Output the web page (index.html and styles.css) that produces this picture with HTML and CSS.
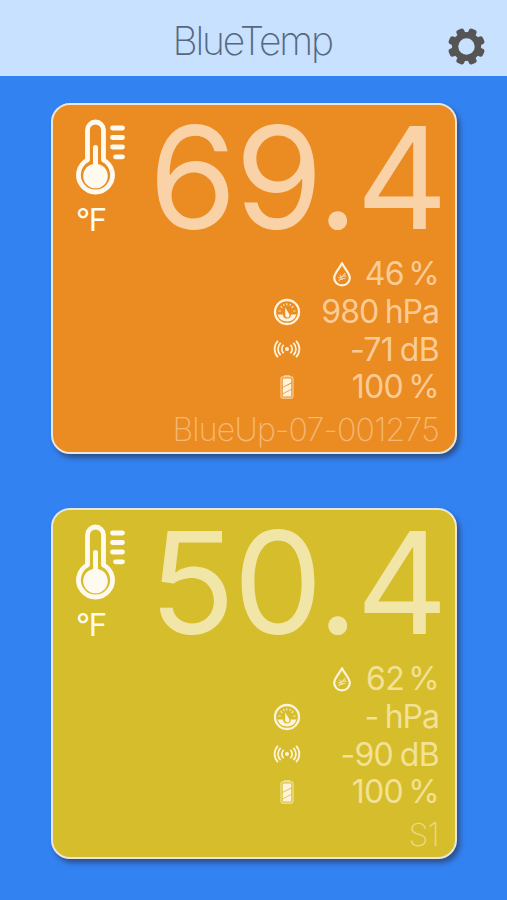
FILE: index.html
```
<!DOCTYPE html>
<html lang="en">
<head>
    <meta charset="UTF-8">
    <meta name="viewport" content="width=device-width, initial-scale=1.0">
    <title>BlueTemp</title>
    <link rel="stylesheet" href="styles.css">
</head>
<body>
    <!-- Shared icons -->
    <svg class="sprite">
        <symbol id="thermometer" viewBox="0 0 50 78">
            <path d="M11.500 42V12a8 8 0 0 1 16 0V42A17 17 0 1 1 11.500 42Z" fill="none" stroke="currentColor" stroke-width="4.8" stroke-linejoin="round"/>
            <circle cx="19.500" cy="58" r="12.300" fill="currentColor"/>
            <path d="M19.500 55V29.500" stroke="currentColor" stroke-width="5" stroke-linecap="round"/>
            <path d="M36.500 10H46.500M36.500 19.500H46.500M36.500 29H46.500M39.500 38.800H46.500" stroke="currentColor" stroke-width="4.800" stroke-linecap="round"/>
        </symbol>
        <symbol id="drop" viewBox="0 0 20 26">
            <path d="M10 2.200C8 7 2.200 12.200 2.200 17a7.800 7.400 0 0 0 15.600 0C17.800 12.200 12 7 10 2.200Z" fill="none" stroke="currentColor" stroke-width="2.200" stroke-linejoin="round"/>
            <path d="M7 19.500l6-7M6.500 16.500h3M8 14.200l1.500 2M11 15.200h3M10.500 17.500h2.500M8 18.500h2.500" fill="none" stroke="currentColor" stroke-width="1.200" stroke-linecap="round" opacity=".65"/>
        </symbol>
        <symbol id="gauge" viewBox="0 0 28 28">
            <circle cx="14" cy="14" r="12" fill="none" stroke="currentColor" stroke-width="2.300"/>
            <path d="M4.500 16.500h5.500a4 4 0 0 0 8 0h5.500a10 10 0 0 1-19 0Z" fill="currentColor"/>
            <path d="M12.200 9.500l3.800 6.300a2.200 2.200 0 1 1-3.800 1Z" fill="currentColor"/>
            <path d="M5.800 13h1.600M8 8.500l1 1M13.800 5.500v1.600M20 8.500l-1 1M22.200 13h-1.600M10.600 6.500l.5 1M17.400 6.500l-.5 1" stroke="currentColor" stroke-width="1.200" stroke-linecap="round" opacity=".8"/>
        </symbol>
        <symbol id="signal" viewBox="0 0 28 22">
            <circle cx="14" cy="11" r="2.200" fill="currentColor"/>
            <path d="M10.300 6.500a6 6 0 0 0 0 9M17.700 6.500a6 6 0 0 1 0 9M7 4.200a9.500 9.500 0 0 0 0 13.600M21 4.200a9.500 9.500 0 0 1 0 13.600M4 2a13 13 0 0 0 0 18M24 2a13 13 0 0 1 0 18" fill="none" stroke="currentColor" stroke-width="1.900"/>
        </symbol>
        <symbol id="battery" viewBox="0 0 14 24">
            <path d="M4.500 1.800V.7h5v1.100" fill="none" stroke="currentColor" stroke-width="1.100" opacity=".7"/>
            <rect x="1" y="1.900" width="12" height="21.200" rx="1.800" fill="none" stroke="currentColor" stroke-width="1.100" opacity=".7"/>
            <path d="M2.700 3.600h8.600v4L2.700 12ZM2.700 12.800l8.600-4.400v5.600L2.700 18.400ZM2.700 19.200l8.600-4.400v6.600H2.700Z" fill="currentColor"/>
        </symbol>
    </svg>

    <header class="header">
        <h1>BlueTemp</h1>
        <svg class="settings" viewBox="-18 -18 36 36">
            <g fill="#555">
                <rect x="-4" y="-18" width="8" height="36" rx="2.500" transform="rotate(22.500)"/>
                <rect x="-4" y="-18" width="8" height="36" rx="2.500" transform="rotate(67.500)"/>
                <rect x="-4" y="-18" width="8" height="36" rx="2.500" transform="rotate(112.500)"/>
                <rect x="-4" y="-18" width="8" height="36" rx="2.500" transform="rotate(157.500)"/>
                <circle r="14.200"/>
            </g>
            <circle r="8" fill="#c7e1fe"/>
        </svg>
    </header>

    <main class="sensors">
        <section class="card orange">
            <div class="top">
                <div class="unit">
                    <svg class="thermometer"><use href="#thermometer"/></svg>
                    <span>°F</span>
                </div>
                <div class="temp">69.4</div>
            </div>
            <div class="row humidity"><svg><use href="#drop"/></svg><span>46 %</span></div>
            <div class="row pressure"><svg><use href="#gauge"/></svg><span>980 hPa</span></div>
            <div class="row signal"><svg><use href="#signal"/></svg><span>-71 dB</span></div>
            <div class="row battery"><svg><use href="#battery"/></svg><span>100 %</span></div>
            <div class="name">BlueUp-07-001275</div>
        </section>

        <section class="card yellow">
            <div class="top">
                <div class="unit">
                    <svg class="thermometer"><use href="#thermometer"/></svg>
                    <span>°F</span>
                </div>
                <div class="temp">50.4</div>
            </div>
            <div class="row humidity"><svg><use href="#drop"/></svg><span>62 %</span></div>
            <div class="row pressure"><svg><use href="#gauge"/></svg><span>- hPa</span></div>
            <div class="row signal"><svg><use href="#signal"/></svg><span>-90 dB</span></div>
            <div class="row battery"><svg><use href="#battery"/></svg><span>100 %</span></div>
            <div class="name">S1</div>
        </section>
    </main>
</body>
</html>
```
FILE: styles.css
```
* {
    margin: 0;
    padding: 0;
    box-sizing: border-box;
    font-family: 'Inter', 'Liberation Sans', sans-serif;
}
body {
    height: 900px;
    overflow: hidden;
    background: #3382f2;
}
.sprite {
    display: none;
}
.header {
    display: grid;
    grid-template-columns: 1fr 160px 1fr;
    align-items: center;
    height: 76px;
    padding: 6px 22px 0 22px;
    background: #c7e1fe;
}
.header h1 {
    grid-column: 2;
    margin-left: -1px;
    font-size: 39px;
    font-weight: 200;
    letter-spacing: -2.2px;
    line-height: 70px;
    white-space: nowrap;
    color: #566880;
}
.settings {
    width: 37px;
    height: 37px;
    margin-top: 11px;
    justify-self: end;
}
.sensors {
    display: flex;
    flex-direction: column;
    gap: 54px;
    padding: 27px 50px 0 51px;
}
.card {
    height: 351px;
    padding: 0 16px 0 23px;
    border: 2px solid #e9e5df;
    border-radius: 19px;
    box-shadow: 3px 4px 5px rgba(40, 55, 85, 0.65);
}
.orange {
    background: #ea8c22;
    color: #facb96;
}
.yellow {
    background: #d6bd2c;
    color: #f3e196;
}
.top {
    display: flex;
    justify-content: space-between;
    height: 150px;
}
.unit {
    padding-top: 13px;
    color: #fffaf0;
}
.unit span {
    display: block;
    margin-top: 5px;
    font-size: 31px;
    font-weight: 400;
    line-height: 38px;
    letter-spacing: -1.3px;
}
.thermometer {
    display: block;
    width: 50px;
    height: 78px;
}
.temp {
    margin-right: -7px;
    font-size: 142px;
    line-height: 145px;
    letter-spacing: -2px;
    white-space: nowrap;
}
.orange .temp {
    color: #fad2a8;
}
.yellow .temp {
    color: #f1e6a8;
}
.row {
    display: flex;
    justify-content: flex-end;
    align-items: center;
    height: 37.7px;
    font-size: 32px;
    font-weight: 400;
    letter-spacing: -0.7px;
    word-spacing: -1.5px;
    white-space: nowrap;
}
.row svg {
    width: 28px;
    height: 28px;
    color: #fff3dc;
}
.row span {
    width: 138px;
    text-align: right;
}
.row.pressure {
    letter-spacing: -1px;
}
.humidity span {
    width: 83px;
    word-spacing: -4px;
}
.battery span {
    word-spacing: -3px;
}
.humidity svg {
    height: 26px;
}
.signal svg {
    height: 20px;
}
.battery svg {
    height: 24px;
}
.name {
    font-size: 32px;
    font-weight: 200;
    line-height: 48px;
    text-align: right;
    letter-spacing: -0.75px;
    white-space: nowrap;
}
.orange .name {
    color: #f6b774;
}
.yellow .name {
    color: #ead883;
}
```
